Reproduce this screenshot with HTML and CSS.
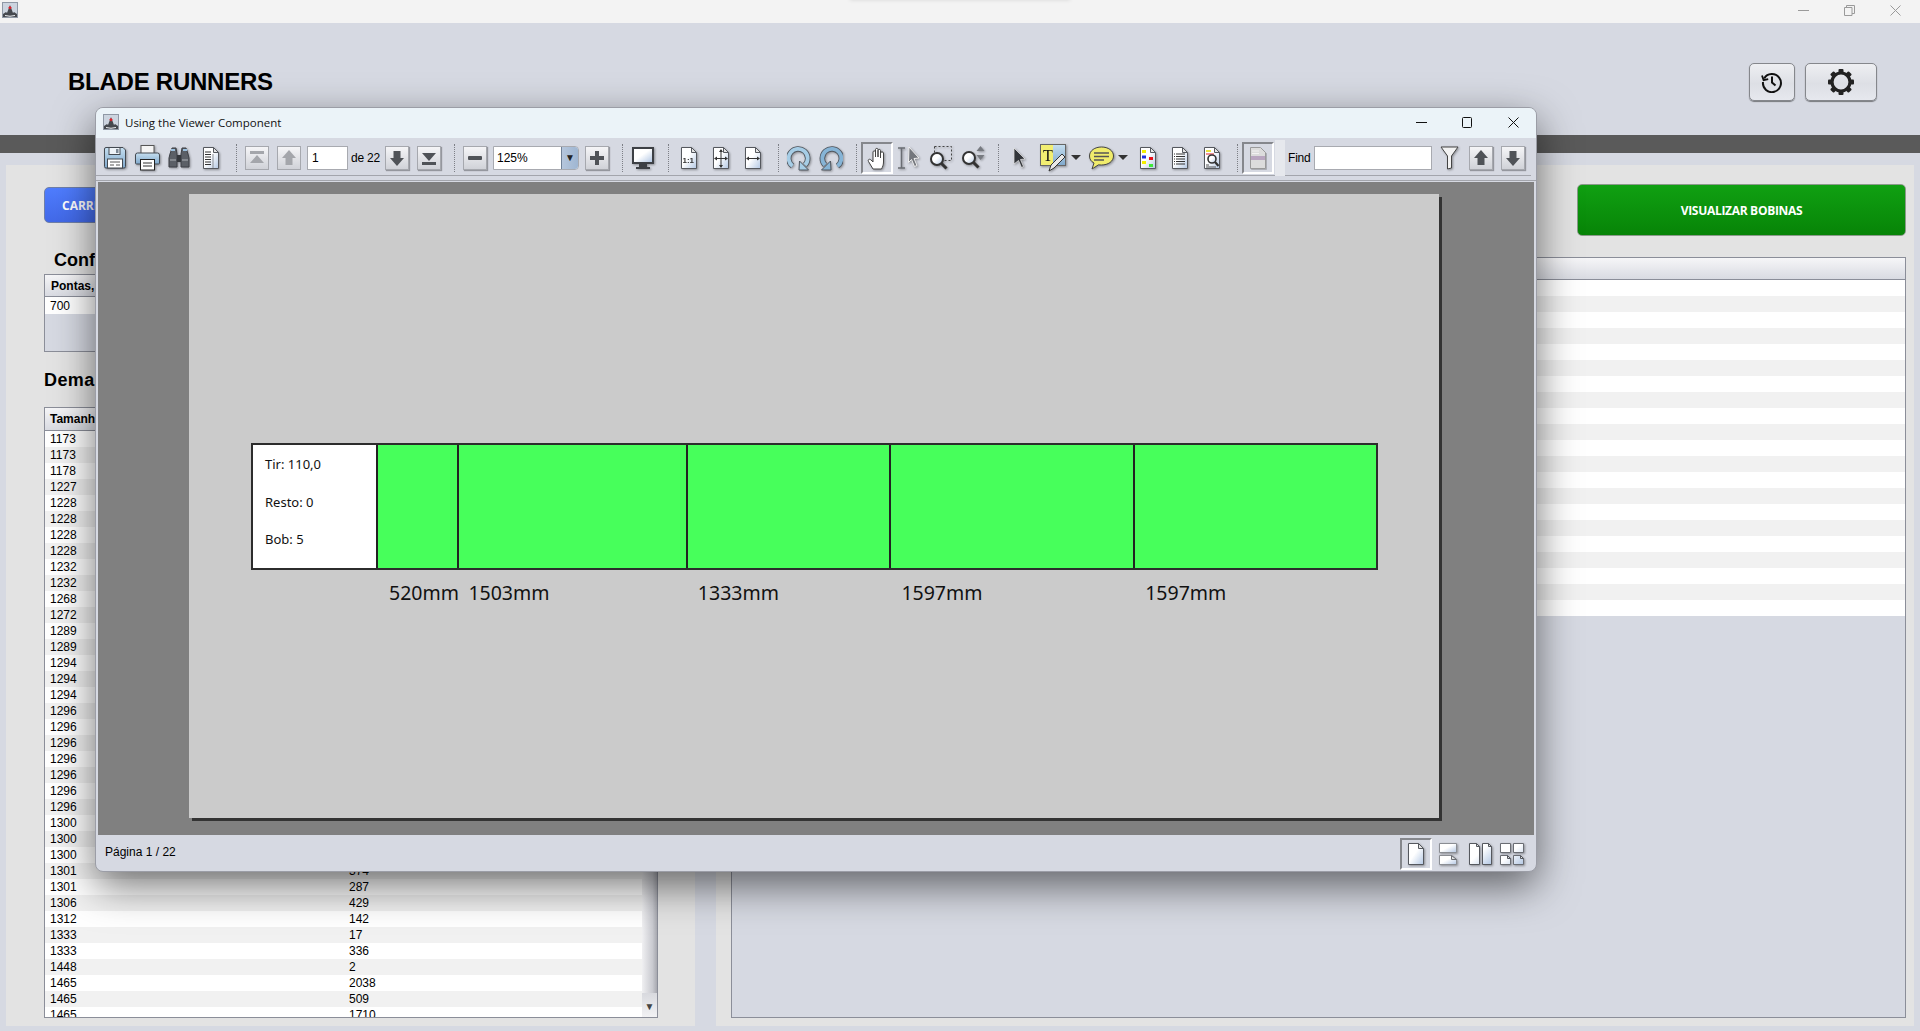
FILE: index.html
```html
<!DOCTYPE html>
<html lang="pt-BR">
<head>
  <meta charset="UTF-8">
  <title>BLADE RUNNERS</title>
  <link rel="stylesheet" href="styles.css">
</head>
<body>
  <!-- gradientes e simbolos usados pelos icones -->
  <svg class="defs" width="0" height="0" aria-hidden="true">
    <defs>
      <linearGradient id="paper" x1="0" y1="0" x2="1" y2="1">
        <stop offset="0.45" stop-color="#ffffff"/>
        <stop offset="1" stop-color="#b4c8e4"/>
      </linearGradient>
      <linearGradient id="blue" x1="0" y1="0" x2="0" y2="1">
        <stop offset="0" stop-color="#c6dff0"/>
        <stop offset="1" stop-color="#7fa8cc"/>
      </linearGradient>
      <symbol id="page" viewBox="0 0 18 24">
        <path d="M1.5 1.5h10l5 5v16h-15z" fill="url(#paper)" stroke="#55585e"/>
        <path d="M11.5 1.5v5h5z" fill="#e4e4e4" stroke="#55585e"/>
      </symbol>
      <symbol id="up" viewBox="0 0 22 22">
        <path d="M11 3l7 8h-3.500v7h-7v-7H4z"/>
      </symbol>
      <symbol id="down" viewBox="0 0 22 22">
        <path d="M11 19l7-8h-3.500V4h-7v7H4z"/>
      </symbol>
      <symbol id="java" viewBox="0 0 16 16">
        <rect x="0.500" y="0.500" width="15" height="15" fill="#ccd4df" stroke="#8f98a5"/>
        <path d="M1 12l3-2 1 1 3-8 3 8 1-1 3 2v3H1z" fill="#45494f"/>
        <path d="M8 4l1.800 1.800L8 7.600 6.200 5.800z" fill="#e0202a"/>
        <path d="M3 13.500q5 1.500 10 0" stroke="#eceff3" fill="none"/>
      </symbol>
    </defs>
  </svg>

  <div class="os-bar">
    <svg class="os-icon"><use href="#java"/></svg>
    <span class="os-notch"></span>
    <div class="os-controls">
      <span class="os-btn"><svg width="11" height="11"><path d="M0 5.500h11" stroke="#9a9a9a"/></svg></span>
      <span class="os-btn"><svg width="11" height="11"><path d="M.5 2.500h7.500v8H.5zM2.500 2.500V.5h8v8H8" fill="none" stroke="#9a9a9a"/></svg></span>
      <span class="os-btn"><svg width="11" height="11"><path d="M.5.5l10 10M10.500.5l-10 10" stroke="#9a9a9a"/></svg></span>
    </div>
  </div>

  <header class="top">
    <h1>BLADE RUNNERS</h1>
    <div class="top-actions">
      <button class="top-btn small">
        <svg width="22" height="22" viewBox="0 0 22 22" fill="none" stroke="#111" stroke-width="2">
          <path d="M3.200 7.500A9 9 0 1 1 2 11"/>
          <path d="M1 4.500l1.600 4.600 4.600-1" stroke-width="1.800"/>
          <path d="M11 5.500V11.500l3.500 3" stroke-width="2"/>
        </svg>
      </button>
      <button class="top-btn">
        <svg width="28" height="28" viewBox="0 0 28 28">
          <circle cx="14" cy="14" r="9" fill="none" stroke="#222" stroke-width="3.200"/>
          <g fill="#222">
            <rect x="11.500" y="1" width="5" height="5" rx="1"/>
            <rect x="11.500" y="22" width="5" height="5" rx="1"/>
            <rect x="1" y="11.500" width="5" height="5" rx="1"/>
            <rect x="22" y="11.500" width="5" height="5" rx="1"/>
            <rect x="11.500" y="1" width="5" height="5" rx="1" transform="rotate(45 14 14)"/>
            <rect x="11.500" y="22" width="5" height="5" rx="1" transform="rotate(45 14 14)"/>
            <rect x="1" y="11.500" width="5" height="5" rx="1" transform="rotate(45 14 14)"/>
            <rect x="22" y="11.500" width="5" height="5" rx="1" transform="rotate(45 14 14)"/>
          </g>
        </svg>
      </button>
    </div>
  </header>

  <div class="dark-bar"></div>

  <main class="main">
    <section class="panel left-panel">
      <button class="btn-blue">CARREGAR</button>
      <h2 class="conf-title">Configurações</h2>
      <div class="conf-table">
        <div class="th">Pontas,</div>
        <div class="conf-row">700</div>
      </div>
      <h2 class="dem-title">Demandas</h2>
      <div class="dem-box">
        <table class="dem-table">
          <thead><tr><th>Tamanho</th><th></th></tr></thead>
          <tbody>
            <tr><td>1173</td><td></td></tr>
            <tr><td>1173</td><td></td></tr>
            <tr><td>1178</td><td></td></tr>
            <tr><td>1227</td><td></td></tr>
            <tr><td>1228</td><td></td></tr>
            <tr><td>1228</td><td></td></tr>
            <tr><td>1228</td><td></td></tr>
            <tr><td>1228</td><td></td></tr>
            <tr><td>1232</td><td></td></tr>
            <tr><td>1232</td><td></td></tr>
            <tr><td>1268</td><td></td></tr>
            <tr><td>1272</td><td></td></tr>
            <tr><td>1289</td><td></td></tr>
            <tr><td>1289</td><td></td></tr>
            <tr><td>1294</td><td></td></tr>
            <tr><td>1294</td><td></td></tr>
            <tr><td>1294</td><td></td></tr>
            <tr><td>1296</td><td></td></tr>
            <tr><td>1296</td><td></td></tr>
            <tr><td>1296</td><td></td></tr>
            <tr><td>1296</td><td></td></tr>
            <tr><td>1296</td><td></td></tr>
            <tr><td>1296</td><td></td></tr>
            <tr><td>1296</td><td></td></tr>
            <tr><td>1300</td><td></td></tr>
            <tr><td>1300</td><td></td></tr>
            <tr><td>1300</td><td></td></tr>
            <tr><td>1301</td><td>374</td></tr>
            <tr><td>1301</td><td>287</td></tr>
            <tr><td>1306</td><td>429</td></tr>
            <tr><td>1312</td><td>142</td></tr>
            <tr><td>1333</td><td>17</td></tr>
            <tr><td>1333</td><td>336</td></tr>
            <tr><td>1448</td><td>2</td></tr>
            <tr><td>1465</td><td>2038</td></tr>
            <tr><td>1465</td><td>509</td></tr>
            <tr><td>1465</td><td>1710</td></tr>
          </tbody>
        </table>
        <div class="scrollbar">
          <div class="scroll-thumb"></div>
          <div class="scroll-btn">▼</div>
        </div>
      </div>
    </section>

    <section class="panel right-panel">
      <button class="btn-green">VISUALIZAR BOBINAS</button>
      <div class="bob-box">
        <div class="th"></div>
        <div class="bob-row"></div><div class="bob-row"></div><div class="bob-row"></div>
        <div class="bob-row"></div><div class="bob-row"></div><div class="bob-row"></div>
        <div class="bob-row"></div><div class="bob-row"></div><div class="bob-row"></div>
        <div class="bob-row"></div><div class="bob-row"></div><div class="bob-row"></div>
        <div class="bob-row"></div><div class="bob-row"></div><div class="bob-row"></div>
        <div class="bob-row"></div><div class="bob-row"></div><div class="bob-row"></div>
        <div class="bob-row"></div><div class="bob-row"></div><div class="bob-row"></div>
      </div>
    </section>
  </main>

  <!-- janela do visualizador de PDF, por cima de tudo -->
  <div class="viewer">
    <div class="viewer-title">
      <svg class="viewer-icon"><use href="#java"/></svg>
      <span class="viewer-name">Using the Viewer Component</span>
      <div class="viewer-controls">
        <span class="win-btn"><svg width="11" height="11"><path d="M0 5.500h11" stroke="#111"/></svg></span>
        <span class="win-btn"><svg width="11" height="11"><rect x=".5" y=".5" width="9" height="10" rx="1" fill="none" stroke="#111"/></svg></span>
        <span class="win-btn"><svg width="11" height="11"><path d="M.5.5l10 10M10.500.5l-10 10" stroke="#111"/></svg></span>
      </div>
    </div>

    <div class="toolbar">
      <span class="slot"><svg class="ico" width="24" height="24" viewBox="0 0 24 24">
        <path d="M1.500 3q0-1.500 1.500-1.500h17l2.500 2.500v16.500q0 1.500-1.500 1.500H3q-1.500 0-1.500-1.500z" fill="url(#blue)" stroke="#444a52"/>
        <rect x="6" y="1.500" width="11" height="7" fill="#eef3f8" stroke="#444a52"/>
        <rect x="13" y="3" width="2.500" height="4" fill="#7b8794"/>
        <rect x="4.500" y="13" width="15" height="9" fill="#fff" stroke="#444a52"/>
        <path d="M7 16h10M7 19h4M13 19h4" stroke="#555"/>
      </svg></span>
      <span class="slot"><svg class="ico" width="27" height="27" viewBox="0 0 27 27">
        <rect x="7" y="1.500" width="13" height="9" fill="#f4f4f4" stroke="#555"/>
        <path d="M1.500 11q0-2 2-2h20q2 0 2 2v8q0 1-1 1H2.500q-1 0-1-1z" fill="url(#blue)" stroke="#444a52"/>
        <rect x="6.500" y="15.500" width="14" height="10.500" fill="#fff" stroke="#222"/>
        <path d="M9 19h9M9 22h9" stroke="#333"/>
      </svg></span>
      <span class="slot"><svg class="ico" width="24" height="24" viewBox="0 0 24 24">
        <path d="M3 8l2-6h4l1 6v13H2V12z" fill="#5b5f66" stroke="#3c3f45"/>
        <path d="M21 8l-2-6h-4l-1 6v13h8V12z" fill="#5b5f66" stroke="#3c3f45"/>
        <rect x="10" y="9" width="4" height="7" fill="#34373c"/>
        <path d="M4 4h4M16 4h4" stroke="#9cc0de" stroke-width="2"/>
        <path d="M3 14h6M15 14h6" stroke="#84888e" stroke-width="2"/>
      </svg></span>
      <span class="slot"><svg class="ico" width="18" height="24" viewBox="0 0 18 24">
        <use href="#page"/>
        <path d="M3 6h6M3 8.500h6M3 11h6M3 13.500h6M3 16h6M3 18.500h6" stroke="#333"/>
        <path d="M11 8v14" stroke="#8a8e96"/>
      </svg></span>
      <span class="sep"></span>
      <span class="slot"><span class="nav-btn off"><svg width="22" height="22" viewBox="0 0 22 22"><path d="M4 4h14v3H4zM11 8l7 8H4z"/></svg></span></span>
      <span class="slot"><span class="nav-btn off"><svg width="22" height="22"><use href="#up"/></svg></span></span>
      <span class="page-input">1</span>
      <span class="page-of">de 22</span>
      <span class="slot"><span class="nav-btn"><svg width="22" height="22"><use href="#down"/></svg></span></span>
      <span class="slot"><span class="nav-btn"><svg width="22" height="22" viewBox="0 0 22 22"><path d="M4 6h14l-7 8zM4 15h14v3H4z"/></svg></span></span>
      <span class="sep"></span>
      <span class="slot"><span class="nav-btn"><svg width="22" height="22" viewBox="0 0 22 22"><rect x="4" y="9" width="14" height="4" rx="1"/></svg></span></span>
      <span class="combo"><span class="combo-text">125%</span><span class="combo-arrow">▼</span></span>
      <span class="slot plus-slot"><span class="nav-btn"><svg width="22" height="22" viewBox="0 0 22 22"><path d="M9 4h4v5h5v4h-5v5H9v-5H4V9h5z"/></svg></span></span>
      <span class="sep"></span>
      <span class="slot"><svg class="ico" width="24" height="24" viewBox="0 0 24 24">
        <rect x="1" y="1" width="22" height="17" fill="#3d4045"/>
        <rect x="3" y="3" width="18" height="13" fill="url(#paper)"/>
        <path d="M8 18h8v3H8zM5 21h14v2H5z" fill="#3d4045"/>
      </svg></span>
      <span class="sep"></span>
      <span class="slot"><svg class="ico" width="18" height="24" viewBox="0 0 18 24">
        <use href="#page"/>
        <text x="2.500" y="17" class="one-one">1:1</text>
      </svg></span>
      <span class="slot"><svg class="ico" width="18" height="24" viewBox="0 0 18 24">
        <use href="#page"/>
        <path d="M9 4v17M3 12.500h12" stroke="#333"/>
        <path d="M9 3l2 3H7zM9 22l2-3H7zM2 12.500l3-2v4zM16 12.500l-3-2v4z" fill="#333"/>
      </svg></span>
      <span class="slot"><svg class="ico" width="18" height="24" viewBox="0 0 18 24">
        <use href="#page"/>
        <path d="M3 12.500h12" stroke="#333"/>
        <path d="M2 12.500l3-2v4zM16 12.500l-3-2v4z" fill="#333"/>
      </svg></span>
      <span class="sep"></span>
      <span class="slot"><svg class="ico" width="24" height="26" viewBox="0 0 24 26" fill="none">
        <path d="M5.500 21A9.500 9.500 0 1 1 18 20" stroke="#50565e" stroke-width="5.500"/>
        <path d="M5.500 21A9.500 9.500 0 1 1 18 20" stroke="#a6cde6" stroke-width="3.800"/>
        <path d="M21.500 25H12l.5-9z" fill="#a6cde6" stroke="#50565e"/>
      </svg></span>
      <span class="slot"><svg class="ico" width="24" height="26" viewBox="0 0 24 26" fill="none">
        <path d="M18.500 21A9.500 9.500 0 1 0 6 20" stroke="#50565e" stroke-width="5.500"/>
        <path d="M18.500 21A9.500 9.500 0 1 0 6 20" stroke="#86b4d6" stroke-width="3.800"/>
        <path d="M2.500 25H12l-.5-9z" fill="#86b4d6" stroke="#50565e"/>
      </svg></span>
      <span class="sep"></span>
      <span class="slot pressed"><svg class="ico" width="22" height="24" viewBox="0 0 22 24">
        <path d="M7 23L2.500 15.500C1.500 13.500 3.500 12.500 5 14L7 16V6C7 4.500 9.500 4.500 9.500 6V11V3.500C9.500 2 12 2 12 3.500V11V4.500C12 3 14.500 3 14.500 4.500V12V7C14.500 5.500 17.500 5.500 17.500 7V16C17.500 19 16.500 21 15.500 23Z" fill="#fff" stroke="#444"/>
      </svg></span>
      <span class="slot"><svg class="ico" width="24" height="24" viewBox="0 0 24 24">
        <path d="M1 2h7M1 22h7M4.500 2v20" stroke="#6a6d73" stroke-width="1.500"/>
        <path d="M12 1l10 11-5 .5 3 7-2.500 1-3-7-3 3z" fill="#74777d" stroke="#eee"/>
      </svg></span>
      <span class="slot"><svg class="ico" width="24" height="26" viewBox="0 0 24 26">
        <rect x="5.500" y="1.500" width="17" height="14" fill="none" stroke="#444" stroke-dasharray="2 2"/>
        <circle cx="8" cy="14" r="6" fill="url(#paper)" stroke="#333" stroke-width="2"/>
        <path d="M12.500 18.500l5 5" stroke="#333" stroke-width="3"/>
      </svg></span>
      <span class="slot"><svg class="ico" width="24" height="26" viewBox="0 0 24 26">
        <circle cx="8" cy="13" r="6" fill="url(#paper)" stroke="#333" stroke-width="2"/>
        <path d="M12.500 17.500l5 5" stroke="#333" stroke-width="3"/>
        <path d="M19.500 1l4 5h-8zM19.500 15l4-5h-8z" fill="#777a80"/>
      </svg></span>
      <span class="sep"></span>
      <span class="slot"><svg class="ico" width="13" height="22" viewBox="0 0 13 22">
        <path d="M1 1l11 11-4.500.5 3 7-2 1-3-7L1 17z" fill="#33363b" stroke="#eee" stroke-width=".7"/>
      </svg></span>
      <span class="slot-t"><svg class="ico" width="27" height="28" viewBox="0 0 27 28">
        <rect x=".5" y=".5" width="25" height="21" fill="url(#blue)" stroke="#666"/>
        <rect x="1" y="1" width="12" height="20" fill="#f2ee72"/>
        <text x="3" y="17" class="t-letter">T</text>
        <path d="M9 27l2-6 11-11 3 3-11 11z" fill="#e8e8e8" stroke="#333"/>
      </svg><span class="caret"></span></span>
      <span class="slot-c"><svg class="ico" width="25" height="24" viewBox="0 0 25 24">
        <path d="M12.500 1C19 1 24.500 4.500 24.500 10S19 19 12.500 19c-1 0-2 0-3-.2L3 23l2-6C2 15.500.5 13 .5 10 .5 4.500 6 1 12.500 1z" fill="#f0ec6c" stroke="#444"/>
        <path d="M5 7h15M5 10.500h15M5 14h10" stroke="#555" stroke-width="1.400"/>
      </svg><span class="caret"></span></span>
      <span class="slot"><svg class="ico" width="18" height="24" viewBox="0 0 18 24">
        <use href="#page"/>
        <path d="M3 4h4v3H3zM3 15h4v3H3z" fill="#f4f000"/>
        <path d="M3 9.500h4v3H3z" fill="#1f2fe0"/>
        <path d="M10 11h4v3h-4z" fill="#e8101a"/>
        <path d="M10 18h4v3h-4z" fill="#3fe83a"/>
      </svg></span>
      <span class="slot"><svg class="ico" width="18" height="24" viewBox="0 0 18 24">
        <use href="#page"/>
        <path d="M5 8h9M5 10.500h9M5 13h9M5 15.500h9M5 18h9" stroke="#333"/>
        <path d="M3 8h1M3 10.500h1M3 13h1M3 15.500h1M3 18h1" stroke="#333"/>
      </svg></span>
      <span class="slot"><svg class="ico" width="18" height="24" viewBox="0 0 18 24">
        <use href="#page"/>
        <path d="M3 5h5" stroke="#e4d800" stroke-width="1.500"/>
        <path d="M3 8h8" stroke="#e86a70" stroke-width="1.500"/>
        <path d="M3 19h3M3 21h10" stroke="#555"/>
        <circle cx="9" cy="13" r="4" fill="url(#paper)" stroke="#333" stroke-width="1.600"/>
        <path d="M12 16l3.500 4" stroke="#333" stroke-width="2.200"/>
      </svg></span>
      <span class="sep"></span>
      <span class="slot pressed"><svg class="ico-off" width="18" height="24" viewBox="0 0 18 24">
        <path d="M1.500 1.500h10l5 5v16h-15z" fill="#dcdcdc" stroke="#9a9a9a"/>
        <path d="M3 5h7M3 7.500h7" stroke="#f2f2f2"/>
        <rect x="2" y="10" width="14" height="4" fill="#b9a6c0"/>
      </svg></span>
      <span class="grip"></span>
      <span class="find-label">Find</span>
      <span class="find-input"></span>
      <span class="slot funnel-slot"><svg class="ico" width="19" height="24" viewBox="0 0 19 24">
        <path d="M1 1h17l-6.500 9v12l-4 1V10z" fill="#f2f2f2" stroke="#444"/>
      </svg></span>
      <span class="slot"><span class="nav-btn"><svg width="22" height="22"><use href="#up"/></svg></span></span>
      <span class="slot"><span class="nav-btn"><svg width="22" height="22"><use href="#down"/></svg></span></span>
    </div>

    <div class="view">
      <div class="pdf-page">
        <div class="pattern">
          <div class="pattern-bar">
            <div class="pattern-info">
              <span>Tir: 110,0</span>
              <span>Resto: 0</span>
              <span>Bob: 5</span>
            </div>
            <div class="cuts">
              <div class="cut" style="flex-grow: 520"></div>
              <div class="cut" style="flex-grow: 1503"></div>
              <div class="cut" style="flex-grow: 1333"></div>
              <div class="cut" style="flex-grow: 1597"></div>
              <div class="cut" style="flex-grow: 1597"></div>
            </div>
          </div>
          <div class="pattern-labels">
            <span class="label-space"></span>
            <div class="cuts labels">
              <span class="cut-label" style="flex-grow: 520">520mm</span>
              <span class="cut-label" style="flex-grow: 1503">1503mm</span>
              <span class="cut-label" style="flex-grow: 1333">1333mm</span>
              <span class="cut-label" style="flex-grow: 1597">1597mm</span>
              <span class="cut-label" style="flex-grow: 1597">1597mm</span>
            </div>
          </div>
        </div>
      </div>
    </div>

    <div class="viewer-foot">
      <span class="page-count">Página 1 / 22</span>
      <div class="modes">
        <span class="mode pressed"><svg class="ico" width="18" height="24"><use href="#page"/></svg></span>
        <span class="mode"><svg class="ico" width="20" height="24" viewBox="0 0 20 24">
          <path d="M1.500 1.500h17v9h-17z" fill="url(#paper)" stroke="#8a8d93"/>
          <path d="M1.500 13.500h12l5 4v5h-17z" fill="url(#paper)" stroke="#8a8d93"/>
          <path d="M13.500 13.500v4h5z" fill="#e4e4e4" stroke="#6a6d73"/>
        </svg></span>
        <span class="mode"><svg class="ico" width="25" height="24" viewBox="0 0 25 24">
          <path d="M1.500 1.500h7l3 3v18h-10zM14.500 1.500h6l3 3v18h-9z" fill="url(#paper)" stroke="#55585e"/>
          <path d="M8.500 1.500v3h3zM20.500 1.500v3h3z" fill="#e4e4e4" stroke="#55585e"/>
        </svg></span>
        <span class="mode"><svg class="ico" width="26" height="24" viewBox="0 0 26 24">
          <path d="M1.500 1.500h10v9h-10zM14.500 1.500h10v9h-10zM1.500 13.500h7l3 3v6h-10zM14.500 13.500h7l3 3v6h-10z" fill="url(#paper)" stroke="#6a6d73"/>
          <path d="M8.500 13.500v3h3zM21.500 13.500v3h3z" fill="#e4e4e4" stroke="#55585e"/>
        </svg></span>
      </div>
    </div>
  </div>
</body>
</html>
```

FILE: styles.css
```css
/* Estilo geral */
html, body {
  margin: 0;
  height: 100%;
}

body {
  height: 1031px;
  overflow: hidden;
  background-color: #d6d9e2;
  color: #000;
  font-family: "Liberation Sans", Arial, sans-serif;
  font-size: 12px;
  position: relative;
}

.defs {
  position: absolute;
}

/* Barra de titulo do sistema */
.os-bar {
  height: 23px;
  background-color: #f3f3f3;
  display: flex;
  align-items: center;
  justify-content: space-between;
  padding: 0 2px;
  position: relative;
  overflow: hidden;
}

.os-icon {
  width: 16px;
  height: 16px;
  margin-bottom: 4px;
}

/* sombra fraca no topo da tela */
.os-notch {
  position: absolute;
  left: 850px;
  top: -6px;
  width: 220px;
  height: 6px;
  box-shadow: 0 0 4px rgba(0, 0, 0, 0.12);
}

.os-controls {
  display: flex;
  margin-bottom: 3px;
}

.os-btn {
  width: 46px;
  display: flex;
  justify-content: center;
}

/* Cabecalho */
.top {
  height: 112px;
  display: flex;
  align-items: flex-start;
  justify-content: space-between;
  padding: 0 43px 0 68px;
}

.top h1 {
  margin: 45px 0 0;
  font-size: 24px;
  line-height: 28px;
  font-weight: bold;
  letter-spacing: -0.25px;
}

.top-actions {
  display: flex;
  gap: 10px;
  margin-top: 40px;
}

.top-btn {
  width: 72px;
  height: 38px;
  padding: 0;
  border: 1px solid #85878c;
  border-radius: 5px;
  background: linear-gradient(#eeeff2, #dddfe5 55%, #e6e8ee);
  box-shadow: 0 1px 1px #77797e;
  display: flex;
  align-items: center;
  justify-content: center;
}

.top-btn.small {
  width: 46px;
}

.dark-bar {
  height: 18px;
  background-color: #5a5a5a;
}

/* Paineis */
.main {
  display: grid;
  grid-template-columns: 689px 1198px;
  grid-template-rows: 861px;
  gap: 21px;
  margin: 12px 6px 0;
  height: 861px;
}

.panel {
  background-color: #e3e3e3;
  display: flex;
  flex-direction: column;
  min-height: 0;
}

.left-panel {
  padding: 22px 37px 8px 38px;
}

.right-panel {
  padding: 19px 8px 8px 15px;
}

.btn-blue {
  width: 300px;
  height: 36px;
  flex: none;
  border: 1px solid #6f7fa8;
  border-radius: 5px;
  background: linear-gradient(#4f7dff, #4269e8);
  color: #fff;
  font-family: "Open Sans", sans-serif;
  font-size: 12px;
  font-weight: bold;
  text-align: left;
  padding-left: 17px;
}

h2 {
  margin: 0;
  font-size: 18px;
  line-height: 22px;
  font-weight: bold;
  flex: none;
}

.conf-title {
  margin: 26px 0 3px 10px;
}

.dem-title {
  margin: 17px 0 16px;
  letter-spacing: 0.4px;
}

.th {
  height: 21px;
  line-height: 23px;
  padding-left: 6px;
  font-weight: bold;
  background: linear-gradient(#f6f6f8, #d9dbe2);
  border-bottom: 1px solid #8b8e99;
}

.conf-table {
  height: 76px;
  flex: none;
  border: 1px solid #8b8e99;
  background-color: #d6d9e2;
}

.conf-row {
  height: 17px;
  line-height: 19px;
  padding-left: 5px;
  background-color: #fff;
}

/* Tabela de demandas */
.dem-box {
  display: flex;
  flex: 1;
  min-height: 0;
  overflow: hidden;
  border: 1px solid #8b8e99;
  background-color: #d6d9e2;
}

.dem-table {
  width: 597px;
  height: min-content;
  border-collapse: collapse;
  table-layout: fixed;
  flex: none;
}

.dem-table th {
  height: 22px;
  padding: 0 0 0 5px;
  text-align: left;
  background: linear-gradient(#f6f6f8, #d9dbe2);
  border-bottom: 1px solid #8b8e99;
}

.dem-table th:first-child,
.dem-table td:first-child {
  width: 294px;
}

.dem-table td {
  height: 16px;
  padding: 0 0 0 5px;
  line-height: 16px;
  background-color: #fff;
}

.dem-table tr:nth-child(even) td {
  background-color: #f1f1f1;
}

.scrollbar {
  flex: 1;
  display: flex;
  flex-direction: column;
  background-color: #e9e9ec;
}

.scroll-thumb {
  flex: 1;
  background: linear-gradient(90deg, #f0f0f2, #c9cad0 70%, #a8a9b0);
}

.scroll-btn {
  height: 24px;
  line-height: 28px;
  text-align: center;
  font-size: 10px;
  color: #444;
  background: linear-gradient(#d8d9de, #f2f2f4);
}

/* Lado direito */
.btn-green {
  align-self: flex-end;
  width: 329px;
  height: 52px;
  flex: none;
  border: 1px solid #8a9a8a;
  border-radius: 5px;
  background: linear-gradient(#10a012, #078407);
  color: #fff;
  font-family: "Open Sans", sans-serif;
  font-size: 12px;
  font-weight: bold;
  letter-spacing: -0.3px;
}

.bob-box {
  flex: 1;
  margin-top: 21px;
  border: 1px solid #8b8e99;
  background-color: #d6d9e2;
}

.bob-row {
  height: 16px;
  background-color: #fff;
}

.bob-row:nth-child(odd) {
  background-color: #f1f1f1;
}

/* Janela do visualizador */
.viewer {
  position: absolute;
  left: 95px;
  top: 107px;
  width: 1442px;
  height: 765px;
  box-sizing: border-box;
  display: flex;
  flex-direction: column;
  background-color: #d6d9e2;
  border: 1px solid #9b9da6;
  border-radius: 8px;
  overflow: hidden;
  box-shadow: 0 14px 40px rgba(0, 0, 0, 0.55);
}

.viewer-title {
  height: 30px;
  flex: none;
  box-sizing: border-box;
  padding: 0 0 2px 7px;
  background-color: #ebf3f8;
  display: flex;
  align-items: center;
}

.viewer-icon {
  width: 16px;
  height: 16px;
}

.viewer-name {
  margin-left: 6px;
  font-family: "Open Sans", sans-serif;
  font-size: 11.500px;
  color: #111;
}

.viewer-controls {
  display: flex;
  margin-left: auto;
}

.win-btn {
  width: 46px;
  display: flex;
  justify-content: center;
}

/* Barra de ferramentas */
.toolbar {
  height: 38px;
  flex: none;
  box-sizing: border-box;
  display: flex;
  align-items: center;
  padding: 2px 0 0 3px;
  margin-right: 5px;
  border-bottom: 1px solid #a3a5ac;
}

.slot {
  width: 32px;
  height: 32px;
  flex: none;
  box-sizing: border-box;
  display: flex;
  align-items: center;
  justify-content: center;
}

.slot.plus-slot {
  margin-left: 2px;
}

.slot.funnel-slot {
  margin-left: 2px;
  width: 31px;
}

.slot-t,
.slot-c {
  height: 32px;
  flex: none;
  display: flex;
  align-items: center;
  padding-left: 5px;
  box-sizing: border-box;
}

.slot-t {
  width: 49px;
}

.slot-c {
  width: 48px;
}

.caret {
  margin-left: 4px;
  width: 0;
  height: 0;
  border-left: 5px solid transparent;
  border-right: 5px solid transparent;
  border-top: 5px solid #333;
}

.pressed {
  border: 2px solid;
  border-color: #85878c #fff #fff #85878c;
}

.ico {
  filter: drop-shadow(1px 1px 1px rgba(0, 0, 0, 0.35));
}

.ico-off {
  filter: drop-shadow(1px 1px 0 rgba(0, 0, 0, 0.2));
}

.sep {
  width: 0;
  height: 28px;
  flex: none;
  border-left: 1px dotted #7d7f86;
  margin: 0 4px 0 9px;
}

.nav-btn {
  width: 24px;
  height: 24px;
  box-sizing: border-box;
  display: flex;
  align-items: center;
  justify-content: center;
  border: 1px solid #a6a8ae;
  background: linear-gradient(#f5f5f7, #d0d2d8);
  box-shadow: 1px 1px 1px rgba(0, 0, 0, 0.3);
  fill: #4f5257;
}

.nav-btn.off {
  fill: #a4a6ab;
  box-shadow: none;
}

.page-input,
.find-input {
  height: 24px;
  box-sizing: border-box;
  flex: none;
  background-color: #fff;
  border: 1px solid #a8aab0;
  line-height: 22px;
  padding-left: 4px;
}

.page-input {
  width: 41px;
  margin-left: 2px;
}

.page-of {
  width: 30px;
  flex: none;
  margin-left: 3px;
  white-space: nowrap;
  letter-spacing: -0.2px;
}

.combo {
  width: 86px;
  height: 24px;
  flex: none;
  box-sizing: border-box;
  margin-left: 2px;
  display: flex;
  background-color: #fff;
  border: 1px solid #a8aab0;
  border-radius: 0 4px 4px 0;
  overflow: hidden;
}

.combo-text {
  flex: 1;
  line-height: 22px;
  padding-left: 3px;
}

.combo-arrow {
  width: 16px;
  line-height: 22px;
  text-align: center;
  font-size: 10px;
  color: #222;
  background: linear-gradient(90deg, #b5c6dc, #9fb6d2);
  border-left: 1px solid #6f8096;
}

.one-one {
  font-family: "Liberation Sans", sans-serif;
  font-size: 8px;
  font-weight: bold;
  fill: #333;
}

.t-letter {
  font-family: "Liberation Serif", serif;
  font-size: 16px;
  fill: #111;
}

.grip {
  width: 10px;
  height: 36px;
  flex: none;
  margin-left: 1px;
  background-color: #e6e8ed;
}

.find-label {
  width: 24px;
  flex: none;
  margin-left: 3px;
  letter-spacing: -0.2px;
}

.find-input {
  width: 118px;
  margin-left: 2px;
}

/* Area do documento */
.view {
  flex: none;
  height: 653px;
  margin: 6px 2px 0;
  background-color: #808080;
  display: flex;
  justify-content: center;
  align-items: flex-start;
  position: relative;
  padding-top: 12px;
  box-sizing: border-box;
}

.view::before {
  content: "";
  position: absolute;
  left: -2px;
  right: -2px;
  top: -2px;
  border-top: 1px solid #a3a5ac;
}

.pdf-page {
  width: 1250px;
  height: 624px;
  flex: none;
  margin-right: 4px;
  background-color: #cbcbcb;
  box-shadow: 3px 3px 0 #333;
  padding: 249px 0 0 62px;
  box-sizing: border-box;
  font-family: "Noto Sans", sans-serif;
  color: #111;
}

.pattern {
  width: 1127px;
}

.pattern-bar {
  height: 127px;
  box-sizing: border-box;
  display: flex;
  border: 2px solid #2c2c2c;
}

.pattern-info {
  width: 123px;
  flex: none;
  box-sizing: border-box;
  background-color: #fff;
  display: flex;
  flex-direction: column;
  gap: 18px;
  padding: 10px 0 0 12px;
  font-size: 13px;
  line-height: 19.500px;
}

.cuts {
  flex: 1;
  display: flex;
}

.cut {
  flex-basis: 0;
  background-color: #47ff5b;
  border-left: 2px solid #222;
}

.pattern-labels {
  display: flex;
  margin-top: 8px;
  padding: 0 2px;
}

.label-space {
  width: 123px;
  flex: none;
}

.cut-label {
  flex-basis: 0;
  min-width: 0;
  text-indent: 13px;
  font-size: 19.500px;
  line-height: 29px;
  white-space: nowrap;
}

/* Rodape da janela */
.viewer-foot {
  flex: 1;
  display: flex;
  align-items: center;
  justify-content: space-between;
  padding-left: 9px;
  padding-right: 8px;
}

.page-count {
  margin-bottom: 2px;
}

.modes {
  display: flex;
  margin-top: 1px;
}

.mode {
  width: 32px;
  height: 32px;
  box-sizing: border-box;
  display: flex;
  align-items: center;
  justify-content: center;
  flex: none;
}
```
